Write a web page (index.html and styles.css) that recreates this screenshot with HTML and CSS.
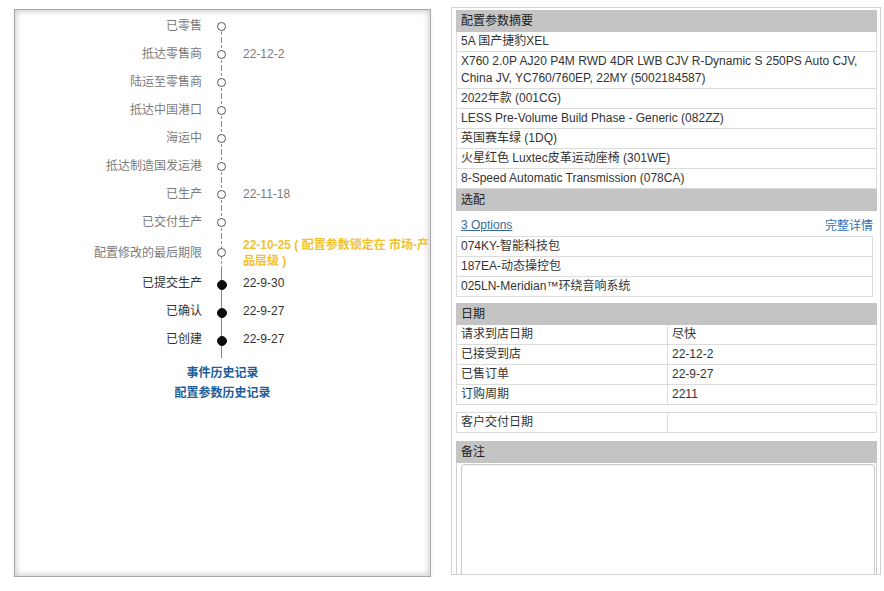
FILE: index.html
```html
<!DOCTYPE html>
<html lang="zh-CN">
<head>
<meta charset="utf-8">
<title>订单状态</title>
<link rel="stylesheet" href="styles.css">
</head>
<body>
<div class="page">
  <div class="status-panel">
    <div class="timeline">
      <div class="tl-row pending first">
        <div class="tl-label">已零售</div>
        <div class="tl-node"><span class="dot"></span></div>
        <div class="tl-date"></div>
      </div>
      <div class="tl-row pending">
        <div class="tl-label">抵达零售商</div>
        <div class="tl-node"><span class="dot"></span></div>
        <div class="tl-date">22-12-2</div>
      </div>
      <div class="tl-row pending">
        <div class="tl-label">陆运至零售商</div>
        <div class="tl-node"><span class="dot"></span></div>
        <div class="tl-date"></div>
      </div>
      <div class="tl-row pending">
        <div class="tl-label">抵达中国港口</div>
        <div class="tl-node"><span class="dot"></span></div>
        <div class="tl-date"></div>
      </div>
      <div class="tl-row pending">
        <div class="tl-label">海运中</div>
        <div class="tl-node"><span class="dot"></span></div>
        <div class="tl-date"></div>
      </div>
      <div class="tl-row pending">
        <div class="tl-label">抵达制造国发运港</div>
        <div class="tl-node"><span class="dot"></span></div>
        <div class="tl-date"></div>
      </div>
      <div class="tl-row pending">
        <div class="tl-label">已生产</div>
        <div class="tl-node"><span class="dot"></span></div>
        <div class="tl-date">22-11-18</div>
      </div>
      <div class="tl-row pending">
        <div class="tl-label">已交付生产</div>
        <div class="tl-node"><span class="dot"></span></div>
        <div class="tl-date"></div>
      </div>
      <div class="tl-row pending tall">
        <div class="tl-label">配置修改的最后期限</div>
        <div class="tl-node"><span class="dot"></span></div>
        <div class="tl-date deadline">22-10-25 ( 配置参数锁定在 市场-产品层级 )</div>
      </div>
      <div class="tl-row done">
        <div class="tl-label">已提交生产</div>
        <div class="tl-node"><span class="dot"></span></div>
        <div class="tl-date">22-9-30</div>
      </div>
      <div class="tl-row done">
        <div class="tl-label">已确认</div>
        <div class="tl-node"><span class="dot"></span></div>
        <div class="tl-date">22-9-27</div>
      </div>
      <div class="tl-row done">
        <div class="tl-label">已创建</div>
        <div class="tl-node"><span class="dot"></span></div>
        <div class="tl-date">22-9-27</div>
      </div>
      <div class="tl-tail">
        <div class="tail-spacer"></div>
        <div class="tail-line"></div>
      </div>
    </div>
    <div class="history-links">
      <a href="#" class="history-link">事件历史记录</a>
      <a href="#" class="history-link">配置参数历史记录</a>
    </div>
  </div>

  <div class="detail-panel">
    <section class="block">
      <div class="block-head">配置参数摘要</div>
      <div class="row">5A 国产捷豹XEL</div>
      <div class="row">X760 2.0P AJ20 P4M RWD 4DR LWB CJV R-Dynamic S 250PS Auto CJV, China JV, YC760/760EP, 22MY (5002184587)</div>
      <div class="row">2022年款 (001CG)</div>
      <div class="row">LESS Pre-Volume Build Phase - Generic (082ZZ)</div>
      <div class="row">英国赛车绿 (1DQ)</div>
      <div class="row">火星红色 Luxtec皮革运动座椅 (301WE)</div>
      <div class="row">8-Speed Automatic Transmission (078CA)</div>
    </section>

    <section class="block">
      <div class="block-head">选配</div>
      <div class="options-bar">
        <a href="#" class="options-count">3 Options</a>
        <a href="#" class="options-detail">完整详情</a>
      </div>
      <div class="options-list">
        <div class="row">074KY-智能科技包</div>
        <div class="row">187EA-动态操控包</div>
        <div class="row">025LN-Meridian™环绕音响系统</div>
      </div>
    </section>

    <section class="block gap-xs">
      <div class="block-head">日期</div>
      <div class="pair-row"><div class="cell">请求到店日期</div><div class="cell">尽快</div></div>
      <div class="pair-row"><div class="cell">已接受到店</div><div class="cell">22-12-2</div></div>
      <div class="pair-row"><div class="cell">已售订单</div><div class="cell">22-9-27</div></div>
      <div class="pair-row"><div class="cell">订购周期</div><div class="cell">2211</div></div>
    </section>

    <section class="block gap-sm">
      <div class="pair-row boxed"><div class="cell">客户交付日期</div><div class="cell"></div></div>
    </section>

    <section class="block gap">
      <div class="block-head">备注</div>
      <div class="notes-box">
        <textarea class="notes" aria-label="备注"></textarea>
      </div>
    </section>
  </div>
</div>
</body>
</html>
```

FILE: styles.css
```css
* {
  box-sizing: border-box;
}

html, body {
  margin: 0;
  padding: 0;
  background: #ffffff;
}

body {
  font-family: "Liberation Sans", "Noto Sans CJK SC", sans-serif;
  font-size: 12px;
  color: #333333;
}

a {
  text-decoration: none;
}

.page {
  display: flex;
  align-items: flex-start;
  gap: 20px;
  padding-left: 14px;
}

/* ---------- Left: status timeline ---------- */
.status-panel {
  width: 417px;
  height: 568px;
  margin-top: 9px;
  border: 1px solid #a8a8a8;
  background: #ffffff;
  box-shadow: inset 0 0 6px 1px rgba(0, 0, 0, 0.22), 0 3px 4px rgba(0, 0, 0, 0.07);
  overflow: hidden;
}

.timeline {
  display: flex;
  flex-direction: column;
  padding-top: 2px;
}

.tl-row {
  display: grid;
  grid-template-columns: 187px 39px 189px;
  min-height: 28px;
  align-items: center;
  line-height: 16px;
}

.tl-row.tall {
  padding-top: 1px;
}

.tl-label {
  text-align: right;
  white-space: nowrap;
}

.tl-date {
  padding-left: 2px;
  white-space: normal;
}

.pending .tl-label,
.pending .tl-date {
  color: #7b7b7b;
}

.done .tl-label,
.done .tl-date {
  color: #333333;
}

.tl-date.deadline {
  color: #f2c230;
  font-weight: bold;
  margin-right: -6px;
}

.tl-node {
  position: relative;
  align-self: stretch;
  display: flex;
  align-items: center;
  justify-content: center;
}

.tl-row.tall .tl-node {
  margin-top: -1px;
}

.tl-node::before {
  content: "";
  position: absolute;
  left: 19px;
  top: 0;
  bottom: 0;
  border-left: 1px dashed #8c8c8c;
}

.first .tl-node::before {
  top: 50%;
}

.done .tl-node::before {
  border-left-style: solid;
  border-left-color: #888888;
}

.dot {
  position: relative;
  width: 9px;
  height: 9px;
  border-radius: 50%;
  border: 1px solid #555555;
  background: #ffffff;
}

.done .dot {
  width: 10px;
  height: 10px;
  margin-top: 3px;
  border-color: #0c0c0c;
  background: #0c0c0c;
}

.tl-tail {
  display: grid;
  grid-template-columns: 187px 39px;
  height: 5px;
}

.tail-line {
  margin-left: 19px;
  border-left: 1px solid #888888;
}

.history-links {
  display: flex;
  flex-direction: column;
  align-items: center;
  margin-top: 5px;
  line-height: 20px;
}

.history-link {
  color: #215d98;
  font-weight: bold;
}

/* ---------- Right: detail panel ---------- */
.detail-panel {
  width: 430px;
  height: 568px;
  margin-top: 7px;
  border: 1px solid #d2d2d2;
  padding: 2px 3px 0 4px;
  overflow: hidden;
  background: #ffffff;
}

.block.gap {
  margin-top: 8px;
}

.block.gap-sm {
  margin-top: 7px;
}

.block.gap-xs {
  margin-top: 6px;
}

.block-head {
  height: 22px;
  line-height: 22px;
  padding: 0 5px;
  background: #c4c4c4;
  color: #222222;
}

.row {
  border: 1px solid #dcdcdc;
  border-top: none;
  padding: 1px 4px;
  line-height: 17px;
  color: #333333;
}

.options-bar {
  display: flex;
  justify-content: space-between;
  align-items: center;
  height: 25px;
  padding: 2px 4px 0 5px;
}

.options-count {
  color: #3a6a9c;
  text-decoration: underline;
}

.options-detail {
  color: #2f6db5;
}

.options-list {
  margin-right: 4px;
  border-top: 1px solid #dcdcdc;
}

.pair-row {
  display: grid;
  grid-template-columns: 210px 1fr;
  border: 1px solid #dcdcdc;
  border-top: none;
  line-height: 17px;
}

.pair-row.boxed {
  border-top: 1px solid #dcdcdc;
}

.pair-row .cell {
  padding: 1px 4px;
  min-height: 19px;
}

.pair-row .cell + .cell {
  border-left: 1px solid #dcdcdc;
}

.notes-box {
  border-left: 1px solid #d0d0d0;
  border-right: 1px solid #d0d0d0;
  padding: 1px 1px 0 4px;
}

.notes {
  display: block;
  width: 100%;
  height: 160px;
  margin: 0;
  border: 1px solid #cccccc;
  border-radius: 3px;
  box-shadow: inset 0 1px 2px rgba(0, 0, 0, 0.06);
  resize: none;
  font: inherit;
  background: #ffffff;
}
```
